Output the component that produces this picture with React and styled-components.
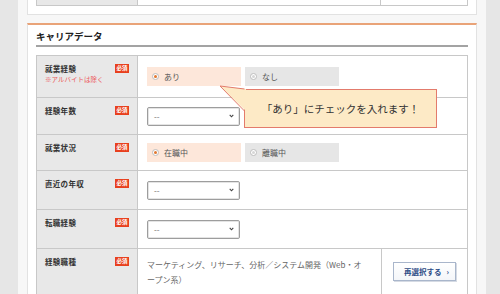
import React from "react";
import styled, { createGlobalStyle } from "styled-components";

const GlobalStyle = createGlobalStyle`
  html, body {
    margin: 0;
    padding: 0;
    background: #e6e6e6;
    font-family: "Noto Sans CJK JP", "Noto Sans", sans-serif;
    color: #333;
  }
`;

const Page = styled.div`
  margin-left: 18px;
  width: 468px;
  height: 294px;
  box-sizing: border-box;
  padding: 0 9px;
  background: #f7f7f7;
  overflow: hidden;
`;

// card that shows only its last few pixels at the top
const PrevCard = styled.div`
  height: 15px;
  box-sizing: border-box;
  background: #fff;
  border: 1px solid #e2e2e2;
  border-top: none;
  padding: 0 8px;
`;

const PrevTable = styled.div`
  display: grid;
  grid-template-columns: 101px 243px 1fr;
  height: 6px;
  box-sizing: border-box;
  border: 1px solid #c8c8c8;
  border-top: none;
`;

const PrevCell = styled.div`
  background: ${(p) => (p.$gray ? "#e8e8e8" : "#fff")};
  border-right: ${(p) => (p.$last ? "none" : "1px solid #c8c8c8")};
`;

const Card = styled.section`
  margin-top: 8px;
  background: #fff;
  border: 1px solid #e2e2e2;
  border-top: 2px solid #e9a378;
  padding: 0 8px 20px;
`;

const Heading = styled.h2`
  margin: 0;
  padding: 4px 0 2px;
  font-size: 9.5px;
  line-height: 14px;
  font-weight: 700;
  color: #222;
  border-bottom: 2px solid #a3a3a3;
`;

const Table = styled.div`
  position: relative;
  margin-top: 8px;
  border: 1px solid #c8c8c8;
  border-bottom: none;
`;

const Row = styled.div`
  display: grid;
  grid-template-columns: 101px 1fr;
  height: ${(p) => p.$h}px;
  box-sizing: border-box;
  border-bottom: 1px solid #c8c8c8;
`;

const LabelCell = styled.div`
  background: #e8e8e8;
  border-right: 1px solid #c8c8c8;
  padding: 6px 8px 0 8px;
`;

const LabelLine = styled.div`
  display: flex;
  align-items: center;
  justify-content: space-between;
  height: 12px;
`;

const Label = styled.span`
  font-size: 7.5px;
  font-weight: 700;
  color: #333;
  letter-spacing: 0.3px;
`;

const Required = styled.span`
  display: inline-flex;
  align-items: center;
  justify-content: center;
  width: 14px;
  height: 9px;
  background: #e8401e;
  color: #fff;
  font-size: 5.5px;
  font-weight: 700;
`;

const Note = styled.div`
  font-size: 6.5px;
  line-height: 10px;
  color: #ec5a5a;
`;

const ValueCell = styled.div`
  display: flex;
  align-items: center;
  gap: 4px;
  padding-left: 9px;
`;

const RadioBox = styled.div`
  display: flex;
  align-items: center;
  gap: 5px;
  width: 94px;
  height: 19px;
  box-sizing: border-box;
  padding-left: 5px;
  background: ${(p) => (p.$checked ? "#fde7da" : "#e6e6e6")};
  font-size: 8px;
  color: #555;
`;

const RadioMark = styled.span`
  display: inline-flex;
  align-items: center;
  justify-content: center;
  width: 7px;
  height: 7px;
  box-sizing: border-box;
  border-radius: 50%;
  border: 1px solid #bdbdbd;
  background: #fff;
  &::after {
    content: "";
    width: 3px;
    height: 3px;
    border-radius: 50%;
    background: ${(p) => (p.$checked ? "#e2772f" : "#d6d6d6")};
  }
`;

const Select = styled.div`
  display: flex;
  align-items: center;
  justify-content: space-between;
  width: 93px;
  height: 19px;
  box-sizing: border-box;
  padding: 0 5px 0 6px;
  border: 1px solid #9d9d9d;
  border-radius: 2px;
  box-shadow: inset 0 0 0 1px #e4e4e4;
  background: #fff;
  font-size: 8px;
  color: #666;
`;

const JobRow = styled.div`
  display: grid;
  grid-template-columns: 244px 1fr;
  align-items: stretch;
`;

const JobText = styled.div`
  display: flex;
  align-items: center;
  padding-left: 9px;
  border-right: 1px solid #c8c8c8;
  p {
    margin: 0;
    width: 219px;
    font-size: 8px;
    line-height: 15px;
    color: #666;
  }
`;

const ButtonCell = styled.div`
  display: flex;
  align-items: center;
  justify-content: center;
`;

const ReselectButton = styled.button`
  display: flex;
  align-items: center;
  justify-content: center;
  gap: 5px;
  width: 63px;
  height: 19px;
  padding: 0 0 0 4px;
  border: 1px solid #a9b6cb;
  background: linear-gradient(#ffffff, #f4f6f9);
  box-shadow: 1px 1px 0 #d5dae3;
  font-family: inherit;
  font-size: 7.5px;
  font-weight: 700;
  color: #2c4b86;
`;

const Tooltip = styled.div`
  position: absolute;
  left: 207px;
  top: 33px;
  width: 193px;
  height: 39px;
  box-sizing: border-box;
  display: flex;
  align-items: center;
  justify-content: center;
  background: #fdeac6;
  border: 1px solid #e37b6c;
  font-size: 10.5px;
  color: #333;
`;

const TooltipArrow = styled.svg`
  position: absolute;
  left: 182px;
  top: 29px;
`;

function Chevron() {
  return (
    <svg width="5" height="4" viewBox="0 0 5 4">
      <path d="M0.7 0.8 L2.5 2.8 L4.3 0.8" fill="none" stroke="#444" strokeWidth="1.1" />
    </svg>
  );
}

function FieldLabel({ children, note }) {
  return (
    <LabelCell>
      <LabelLine>
        <Label>{children}</Label>
        <Required>必須</Required>
      </LabelLine>
      {note && <Note>{note}</Note>}
    </LabelCell>
  );
}

function Radio({ checked, children }) {
  return (
    <RadioBox $checked={checked}>
      <RadioMark $checked={checked} />
      {children}
    </RadioBox>
  );
}

function Dropdown() {
  return (
    <Select>
      <span>--</span>
      <Chevron />
    </Select>
  );
}

export default function App() {
  return (
    <>
      <GlobalStyle />
      <Page>
        <PrevCard>
          <PrevTable>
            <PrevCell $gray />
            <PrevCell />
            <PrevCell $last />
          </PrevTable>
        </PrevCard>

        <Card>
          <Heading>キャリアデータ</Heading>
          <Table>
            <Row $h={42}>
              <FieldLabel note="※アルバイトは除く">就業経験</FieldLabel>
              <ValueCell>
                <Radio checked>あり</Radio>
                <Radio>なし</Radio>
              </ValueCell>
            </Row>
            <Row $h={37}>
              <FieldLabel>経験年数</FieldLabel>
              <ValueCell>
                <Dropdown />
              </ValueCell>
            </Row>
            <Row $h={36}>
              <FieldLabel>就業状況</FieldLabel>
              <ValueCell>
                <Radio checked>在職中</Radio>
                <Radio>離職中</Radio>
              </ValueCell>
            </Row>
            <Row $h={39}>
              <FieldLabel>直近の年収</FieldLabel>
              <ValueCell>
                <Dropdown />
              </ValueCell>
            </Row>
            <Row $h={39}>
              <FieldLabel>転職経験</FieldLabel>
              <ValueCell>
                <Dropdown />
              </ValueCell>
            </Row>
            <Row $h={46}>
              <FieldLabel>経験職種</FieldLabel>
              <JobRow>
                <JobText>
                  <p>マーケティング、リサーチ、分析／システム開発（Web・オープン系）</p>
                </JobText>
                <ButtonCell>
                  <ReselectButton>
                    再選択する<span>›</span>
                  </ReselectButton>
                </ButtonCell>
              </JobRow>
            </Row>

            {/* callout over the first rows */}
            <Tooltip>「あり」にチェックを入れます！</Tooltip>
            <TooltipArrow width="27" height="28" viewBox="0 0 27 28">
              <polygon points="1,1 27,4 27,26" fill="#fdeac6" />
              <polyline points="25.5,4 1,1 25.5,26" fill="none" stroke="#e37b6c" strokeWidth="1" />
            </TooltipArrow>
          </Table>
        </Card>
      </Page>
    </>
  );
}
